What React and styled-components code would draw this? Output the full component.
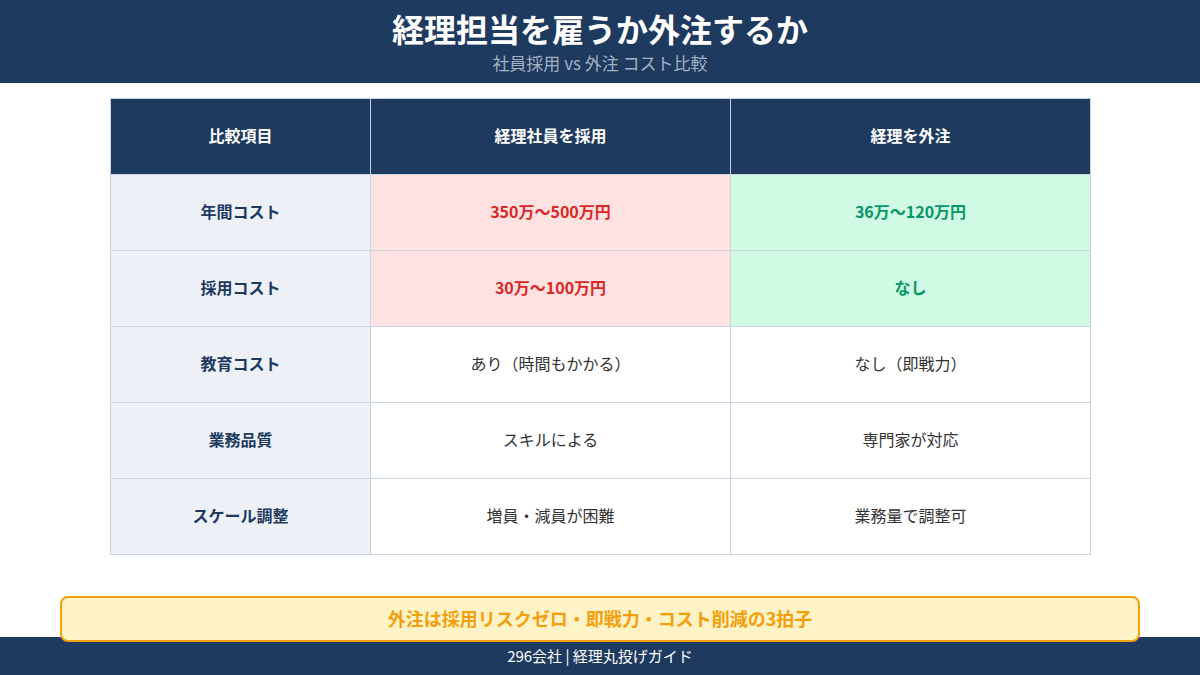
import React from "react";
import styled, { createGlobalStyle } from "styled-components";

const GlobalStyle = createGlobalStyle`
  body {
    margin: 0;
    background: #ffffff;
    font-family: "Noto Sans CJK JP", "Noto Sans", sans-serif;
  }
`;

const Page = styled.div`
  width: 1200px;
  height: 675px;
  display: flex;
  flex-direction: column;
  overflow: hidden;
`;

const Header = styled.header`
  height: 83px;
  background: #1e3a5f;
  display: flex;
  flex-direction: column;
  align-items: center;
  justify-content: center;
  gap: 6px;
  box-sizing: border-box;
`;

const Title = styled.h1`
  margin: 0;
  font-size: 32px;
  line-height: 36px;
  font-weight: 700;
  color: #ffffff;
`;

const Subtitle = styled.div`
  font-size: 17px;
  line-height: 22px;
  color: #a3b1c4;
`;

const Grid = styled.div`
  margin: 15px 0 0 110px;
  width: 981px;
  box-sizing: border-box;
  display: grid;
  grid-template-columns: 259px 359px 359px;
  grid-auto-rows: 75px;
  gap: 1px;
  padding: 1px;
  background: #cbd5e1;
`;

const tones = {
  head: { bg: "#1e3a5f", fg: "#ffffff", weight: 700 },
  label: { bg: "#edf1f7", fg: "#1e3a5f", weight: 700 },
  bad: { bg: "#fee2e2", fg: "#dc2626", weight: 700 },
  good: { bg: "#d1fae5", fg: "#059669", weight: 700 },
  plain: { bg: "#ffffff", fg: "#333333", weight: 400 },
};

const Cell = styled.div`
  display: flex;
  align-items: center;
  justify-content: center;
  padding-bottom: 3px;
  font-size: 16px;
  background: ${(p) => tones[p.$tone].bg};
  color: ${(p) => tones[p.$tone].fg};
  font-weight: ${(p) => tones[p.$tone].weight};
`;

const Callout = styled.div`
  position: relative;
  z-index: 1;
  margin: 41px 60px -5px;
  height: 46px;
  box-sizing: border-box;
  padding-bottom: 3px;
  border: 2px solid #f59e0b;
  border-radius: 8px;
  background: #fef3c7;
  color: #f59e0b;
  font-size: 18px;
  font-weight: 700;
  display: flex;
  align-items: center;
  justify-content: center;
`;

const Footer = styled.footer`
  height: 38px;
  background: #1e3a5f;
  color: #ffffff;
  font-size: 15px;
  display: flex;
  align-items: center;
  justify-content: center;
  padding-bottom: 2px;
  box-sizing: border-box;
`;

const rows = [
  ["年間コスト", ["350万〜500万円", "bad"], ["36万〜120万円", "good"]],
  ["採用コスト", ["30万〜100万円", "bad"], ["なし", "good"]],
  ["教育コスト", ["あり（時間もかかる）", "plain"], ["なし（即戦力）", "plain"]],
  ["業務品質", ["スキルによる", "plain"], ["専門家が対応", "plain"]],
  ["スケール調整", ["増員・減員が困難", "plain"], ["業務量で調整可", "plain"]],
];

export default function App() {
  return (
    <Page>
      <GlobalStyle />
      <Header>
        <Title>経理担当を雇うか外注するか</Title>
        <Subtitle>社員採用 vs 外注 コスト比較</Subtitle>
      </Header>
      <Grid>
        <Cell $tone="head">比較項目</Cell>
        <Cell $tone="head">経理社員を採用</Cell>
        <Cell $tone="head">経理を外注</Cell>
        {rows.map(([label, a, b]) => (
          <React.Fragment key={label}>
            <Cell $tone="label">{label}</Cell>
            <Cell $tone={a[1]}>{a[0]}</Cell>
            <Cell $tone={b[1]}>{b[0]}</Cell>
          </React.Fragment>
        ))}
      </Grid>
      <Callout>外注は採用リスクゼロ・即戦力・コスト削減の3拍子</Callout>
      <Footer>296会社 | 経理丸投げガイド</Footer>
    </Page>
  );
}
